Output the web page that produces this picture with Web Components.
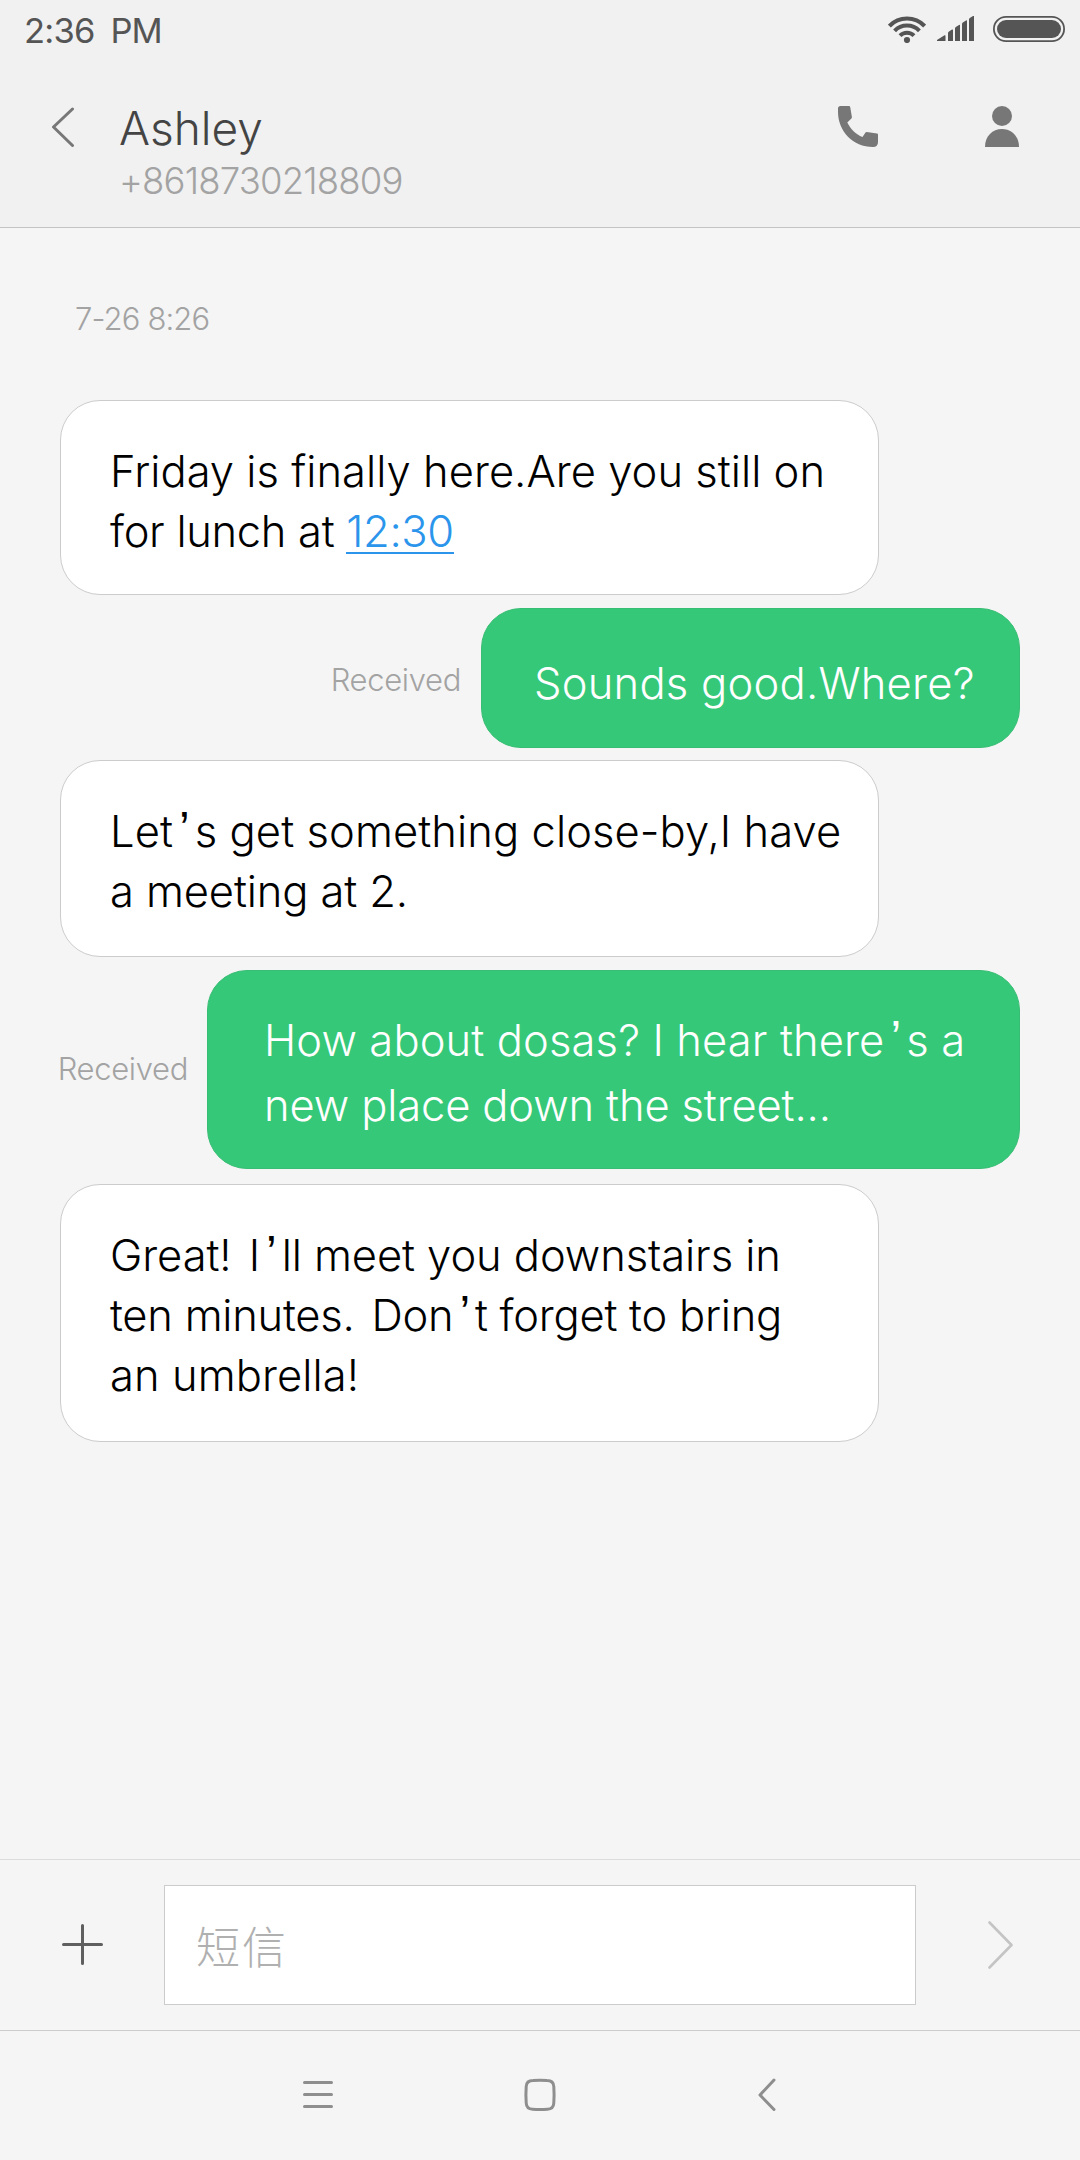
<!DOCTYPE html>
<html lang="en">
<head>
<meta charset="utf-8">
<title>Messages</title>
<style>
html,body{margin:0;padding:0}
body{width:1080px;height:2160px;overflow:hidden;background:#f5f5f5;font-family:Inter,"Noto Sans CJK SC",sans-serif;font-weight:300;font-kerning:normal}
</style>
</head>
<body>
<sms-app>
  <status-bar slot="top">2:36 PM</status-bar>
  <contact-header slot="top"><span slot="name">Ashley</span><span slot="number">+8618730218809</span></contact-header>
  <date-stamp>7-26 8:26</date-stamp>
  <chat-bubble style="--h:195px;--pt:40px;--mt:0px">
    <text-line style="--ls:.03px">Friday is finally here.Are you still on</text-line>
    <text-line style="--ls:-.3px">for lunch at <time-link>12:30</time-link></text-line>
  </chat-bubble>
  <chat-bubble sent style="--w:539px;--h:140px;--pt:44px;--pl:52px;--mt:13px;--sy:4px;--sx:20px">
    <span slot="state">Received</span>
    <text-line style="--ls:.24px">Sounds good.Where?</text-line>
  </chat-bubble>
  <chat-bubble style="--h:197px;--pt:40px;--mt:12px">
    <text-line style="--ls:.08px">Let<apos-mark>’</apos-mark>s get something close-by,I have</text-line>
    <text-line style="--ls:-.12px">a meeting at 2.</text-line>
  </chat-bubble>
  <chat-bubble sent style="--w:813px;--h:199px;--pt:37px;--pl:56px;--lh:65px;--mt:13px;--sy:-2px">
    <span slot="state">Received</span>
    <text-line style="--ls:.12px">How about dosas? I hear there<apos-mark>’</apos-mark>s a</text-line>
    <text-line style="--ls:-.14px">new place down the street...</text-line>
  </chat-bubble>
  <chat-bubble style="--h:258px;--pt:40px;--mt:15px">
    <text-line style="--ls:-.08px">Great!<kern-gap></kern-gap> I<apos-mark>’</apos-mark>ll meet you downstairs in</text-line>
    <text-line style="--ls:-.25px">ten minutes.<kern-gap></kern-gap> Don<apos-mark>’</apos-mark>t forget to bring</text-line>
    <text-line style="--ls:.08px">an umbrella!</text-line>
  </chat-bubble>
  <message-composer slot="bottom">短信</message-composer>
  <nav-bar slot="bottom"></nav-bar>
</sms-app>
<script>
const define = (name, html) => customElements.define(name, class extends HTMLElement {
  constructor() {
    super();
    const t = document.createElement('template');
    t.innerHTML = html;
    this.attachShadow({ mode: 'open' }).append(t.content.cloneNode(true));
  }
});

define('sms-app', `
<style>
:host{display:flex;flex-direction:column;width:1080px;height:2160px;background:#f5f5f5}
main{flex:1;display:flex;flex-direction:column;padding:0 60px}
</style>
<slot name="top"></slot><main><slot></slot></main><slot name="bottom"></slot>`);

define('status-bar', `
<style>
:host{display:flex;align-items:flex-start;justify-content:space-between;height:61px;background:#f1f1f1;color:#555;padding:0 15px 0 24px;box-sizing:border-box}
.t{font-size:34.5px;line-height:61px;font-weight:400;letter-spacing:-.8px;word-spacing:7px;white-space:nowrap}
.i{display:flex;padding-top:16px}
svg{display:block;flex:none}
.sig{margin-left:11px}.bat{margin-left:19px}
</style>
<span class="t"><slot></slot></span>
<span class="i">
<svg width="38" height="27" viewBox="0 0 38 27" fill="none" stroke="#555" stroke-width="4"><path d="M1.4 10a24.5 24.5 0 0 1 35.2 0M6.6 14.8a17.2 17.2 0 0 1 24.8 0M12 19.6a9.8 9.8 0 0 1 14 0"/><circle cx="19" cy="24" r="3.1" fill="#555" stroke="none"/></svg>
<svg class="sig" width="37" height="25" viewBox="0 0 37 25" fill="#555"><path d="M0 25v-1l7.5-4.7q1-.5 1 .5V25zM11 25v-8q0-1 1-1.500l3-2q1-.4 1 .5v11zM18 25V12.500q0-1 .8-1.500l3.200-2q1-.5 1 .5V25zM25 25V8q0-1 .8-1.500l3.200-2q1-.5 1 .5v20zM32 25V3.500q0-1 .8-1.600L36 0q1-.4 1 .5V25z"/></svg>
<svg class="bat" width="72" height="26" viewBox="0 0 72 26"><rect x=".9" y=".9" width="70.200" height="24.200" rx="12.100" fill="none" stroke="#555" stroke-width="1.800"/><rect x="4" y="4" width="64" height="18" rx="9" fill="#555"/></svg>
</span>`);

define('contact-header', `
<style>
:host{display:flex;height:167px;box-sizing:border-box;background:#f1f1f1;border-bottom:1px solid #c4c4c4;padding:39px 61px 0 51px}
svg{display:block;flex:none;margin-top:6px}
.b{margin-top:7px}
.w{flex:1;margin-left:44px;white-space:nowrap}
.n{font-size:46px;line-height:56px;color:#444}
.p{font-size:36.5px;line-height:44px;color:#a3a3a3;letter-spacing:-.82px;margin-top:3px}
.ph{margin-right:107px}
</style>
<svg class="b" width="24" height="40" viewBox="0 0 24 40" fill="none" stroke="#777" stroke-width="3" stroke-linecap="round" stroke-linejoin="round"><path d="M21.500 2L2.500 20l19 18.500"/></svg>
<div class="w"><div class="n"><slot name="name"></slot></div><div class="p"><slot name="number"></slot></div></div>
<svg class="ph" width="40" height="41" viewBox="0 0 40 41" fill="#777"><path d="M0 2.500Q0 0 2.500 0H11q1 0 1.200 1l1.700 10q.1.900-.5 1.500L9.300 16.500c3 6.300 8.700 12 15.200 14.500l3-4.500q.5-.7 1.300-.6l10.200 1.600q1 .2 1 1V36q0 5-5 5C15 41 0 25 0 6z"/></svg>
<svg width="34" height="41" viewBox="0 0 34 41" fill="#777"><circle cx="17" cy="10" r="10"/><path d="M0 41C0 30 7.500 23 17 23s17 7 17 18z"/></svg>`);

define('date-stamp', `
<style>:host{display:block;height:172px;box-sizing:border-box;padding:71px 0 0 15px;font-size:31px;line-height:40px;color:#a3a3a3;letter-spacing:-.87px}</style><slot></slot>`);

define('chat-bubble', `
<style>
:host{display:flex;align-items:center;margin-top:var(--mt);font-size:43.5px;line-height:var(--lh,60px);color:#000}
:host([sent]){justify-content:flex-end;color:#fff}
.b{box-sizing:border-box;flex:none;width:var(--w,819px);height:var(--h);padding:var(--pt) 0 0 var(--pl,49px);border:1px solid #ccc;border-radius:40px;background:#fff}
:host([sent]) .b{background:#35c878;border-color:#38bd74}
.s{font-size:31px;line-height:40px;color:#a3a3a3;letter-spacing:-.34px;margin:var(--sy) var(--sx,19px) 0 0}
:host(:not([sent])) .s{display:none}
</style>
<span class="s"><slot name="state"></slot></span><div class="b"><slot></slot></div>`);

define('text-line', `<style>:host{display:block;white-space:nowrap;letter-spacing:var(--ls)}</style><slot></slot>`);
define('apos-mark', `<style>:host{font-family:"Liberation Sans",sans-serif;font-size:48px;margin:0 5px 0 6px;line-height:0;vertical-align:2px}</style><slot></slot>`);
define('kern-gap', `<style>:host{margin-left:5px}</style>`);
define('time-link', `<style>:host{display:inline-block;box-sizing:border-box;height:60px;vertical-align:top;line-height:60px;color:#2b95ec;letter-spacing:-.36px;background:linear-gradient(#2b95ec,#2b95ec) 0 51px/100% 2px no-repeat}</style><slot></slot>`);

define('message-composer', `
<style>
:host{display:flex;align-items:center;height:171px;box-sizing:border-box;border-top:1px solid #dcdcdc;padding-left:62px}
.f{box-sizing:border-box;width:752px;height:120px;margin:0 72px 0 61px;border:1px solid #ccc;background:#fff;padding-left:31px;font:300 44px/118px "Noto Sans CJK SC",sans-serif;letter-spacing:2px;color:#b0b0b0}
svg{display:block;flex:none}
.pl{margin-bottom:2px}
</style>
<svg class="pl" width="41" height="41" viewBox="0 0 41 41" stroke="#5f5f5f" stroke-width="3" stroke-linecap="round"><path d="M1.500 20.500h38M20.500 1.500v38"/></svg>
<div class="f"><slot></slot></div>
<svg width="25" height="48" viewBox="0 0 25 48" fill="none" stroke="#c4c4c4" stroke-width="2.600" stroke-linecap="round" stroke-linejoin="round"><path d="M1.500 1.500L23.500 24l-22 22.500"/></svg>`);

define('nav-bar', `
<style>
:host{display:flex;align-items:center;height:130px;box-sizing:border-box;border-top:1px solid #ccc;padding:0 0 2px 303px}
svg{display:block;flex:none}.h{margin:0 202px 0 191px}
</style>
<svg width="30" height="34" viewBox="0 0 30 34" stroke="#8e8e8e" stroke-width="3" stroke-linecap="round"><path d="M1.500 4.500h27M1.500 16.500h27M1.500 28.500h27"/></svg>
<svg class="h" width="32" height="34" viewBox="0 0 32 34" fill="none" stroke="#8e8e8e" stroke-width="3"><path d="M9 2.500Q16 2 23 2.500Q29.500 2.500 29.800 8.500Q30.400 17 29.800 25Q29.500 31 23.500 31.200Q16 31.700 8.500 31.200Q2.500 31 2.200 25Q1.600 17 2.200 8.500Q2.500 2.500 9 2.500z"/></svg>
<svg width="18" height="34" viewBox="0 0 18 34" fill="none" stroke="#8e8e8e" stroke-width="3" stroke-linecap="round" stroke-linejoin="round"><path d="M16 2L2 17l14 14.500"/></svg>`);
</script>
</body>
</html>
